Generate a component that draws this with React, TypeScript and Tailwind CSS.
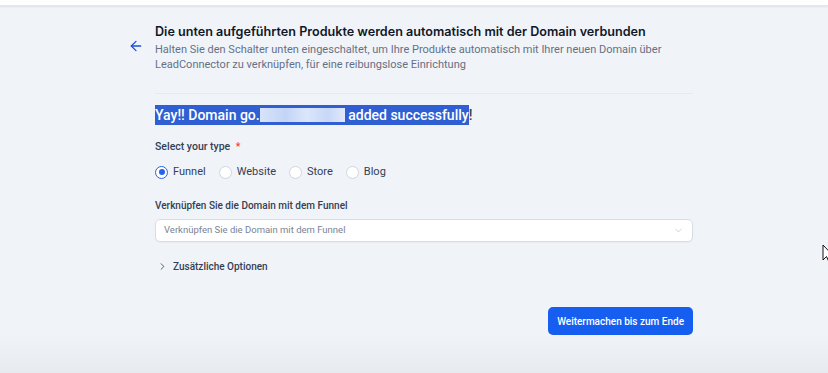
import { ArrowLeft, ChevronDown, ChevronRight } from "lucide-react";

const types = ["Funnel", "Website", "Store", "Blog"];

export default function App() {
  const selected = "Funnel";

  return (
    <div
      className="relative h-[373px] w-full overflow-hidden bg-[#f0f4f9] text-[#101828]"
      style={{ fontFamily: "Roboto, 'Noto Sans', sans-serif" }}
    >
      <div className="pointer-events-none absolute inset-x-0 bottom-0 h-[38px] bg-gradient-to-b from-[#f0f4f9] to-[#e7eaef]" />

      <div className="relative h-[6px] bg-white shadow-[0_1px_2px_rgba(0,0,0,0.08)] border-b border-[#e4e7ec]" />

      <div className="relative flex pl-[128px] pt-[16px]">
        <div className="w-[27px] pt-[16px]">
          <ArrowLeft size={16} strokeWidth={1.9} className="text-[#1d4ed8]" />
        </div>

        <div className="w-[538px]">
          <h1
            className="text-[12.6px] font-semibold leading-[19px] text-[#101828]"
            style={{ fontFamily: "Inter, sans-serif" }}
          >
            Die unten aufgeführten Produkte werden automatisch mit der Domain verbunden
          </h1>
          <p className="mt-[1px] text-[11px] leading-[15px] text-[#667085]">
            Halten Sie den Schalter unten eingeschaltet, um Ihre Produkte automatisch mit Ihrer neuen Domain über
            <br />
            LeadConnector zu verknüpfen, für eine reibungslose Einrichtung
          </p>

          <div className="mt-[21px] border-t border-[#e6eaf0]" />

          <div className="mt-[11px] flex h-[20px] items-center text-[14px] font-medium leading-[20px]">
            <span className="bg-[#2f5fd3] text-white">
              Yay!! Domain go.
              <span className="inline-block h-[14px] w-[85px] translate-y-[2px] bg-[linear-gradient(90deg,#d7e3fa_0%,#c3d4f6_30%,#dbe6fb_55%,#c7d7f6_80%,#e1eafc_100%)]" />
              {" "}added successfully
            </span>
            <span className="text-[#344054]">!</span>
          </div>

          <div className="mt-[14px] text-[10.5px] font-medium leading-[16px] text-[#344054]">
            Select your type <span className="ml-[3px] text-[#f04438]">*</span>
          </div>

          <div className="mt-[9px] flex h-[16px] items-center">
            {types.map((t) => (
              <label key={t} className="mr-[13px] flex items-center gap-[5px] text-[11px] text-[#344054]">
                {t === selected ? (
                  <span className="flex h-[13px] w-[13px] items-center justify-center rounded-full border border-[#2563eb] bg-white">
                    <span className="h-[6px] w-[6px] rounded-full bg-[#2563eb]" />
                  </span>
                ) : (
                  <span className="h-[13px] w-[13px] rounded-full border border-[#d0d5dd] bg-white" />
                )}
                {t}
              </label>
            ))}
          </div>

          <div className="mt-[18px] text-[10px] font-medium leading-[16px] text-[#344054]">
            Verknüpfen Sie die Domain mit dem Funnel
          </div>

          <div className="mt-[5px] flex h-[23px] items-center justify-between rounded-[5px] border border-[#d8dde5] bg-white pl-[8px] pr-[8px] shadow-[0_1px_1px_rgba(16,24,40,0.04)]">
            <span className="text-[9.5px] text-[#7a8394]">Verknüpfen Sie die Domain mit dem Funnel</span>
            <ChevronDown size={11} strokeWidth={1.5} className="text-[#b5bcc8]" />
          </div>

          <div className="mt-[16px] flex h-[16px] items-center gap-[5px] text-[10px] font-medium text-[#344054]">
            <ChevronRight size={11} strokeWidth={1.8} className="ml-[2px] text-[#344054]" />
            Zusätzliche Optionen
          </div>

          <div className="mt-[33px] flex justify-end">
            <button className="h-[28px] rounded-[5px] bg-[#155eef] px-[9px] text-[10px] font-medium text-white">
              Weitermachen bis zum Ende
            </button>
          </div>
        </div>
      </div>

      <svg
        className="absolute left-[822px] top-[244px]"
        width="10"
        height="19"
        viewBox="0 0 10 19"
      >
        <path d="M1 1 L1 16 L4.5 12.5 L7 18 L9 17 L6.5 11.5 L11 11.5 Z" fill="white" stroke="#111" strokeWidth="1" />
      </svg>
    </div>
  );
}
